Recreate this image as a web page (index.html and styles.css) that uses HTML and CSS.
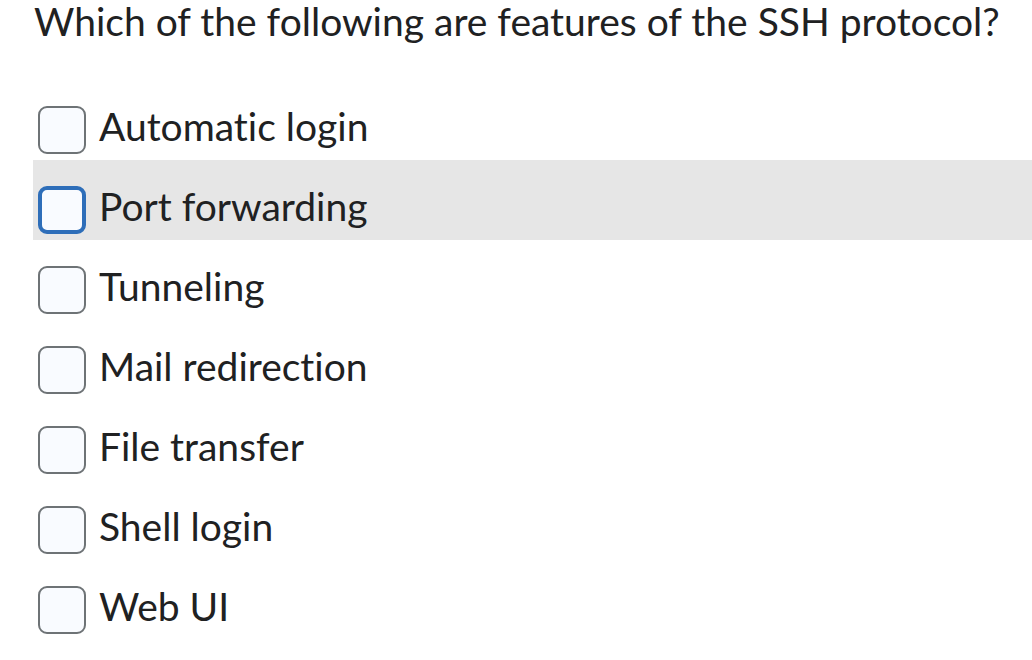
FILE: index.html
```html
<!DOCTYPE html>
<html>
<head>
<meta charset="utf-8">
<link rel="stylesheet" href="styles.css">
</head>
<body>
<div class="quiz">
  <h1 class="question">Which of the following are features of the SSH protocol?</h1>
  <ul class="options">
    <li class="option"><span class="box"></span><span class="label">Automatic login</span></li>
    <li class="option hover"><span class="box focus"></span><span class="label">Port forwarding</span></li>
    <li class="option"><span class="box"></span><span class="label">Tunneling</span></li>
    <li class="option"><span class="box"></span><span class="label">Mail redirection</span></li>
    <li class="option"><span class="box"></span><span class="label">File transfer</span></li>
    <li class="option"><span class="box"></span><span class="label">Shell login</span></li>
    <li class="option"><span class="box"></span><span class="label">Web UI</span></li>
  </ul>
</div>
</body>
</html>
```
FILE: styles.css
```css
html, body {
  margin: 0;
  padding: 0;
  background: #ffffff;
}
body {
  font-family: Lato, "Open Sans", sans-serif;
  color: #202122;
  width: 1032px;
  height: 660px;
  overflow: hidden;
  font-variant-ligatures: no-common-ligatures;
}
.quiz {
  padding-left: 33px;
}
.question {
  margin: 0;
  padding-left: 1px;
  font-size: 39px;
  font-weight: 400;
  line-height: 42px;
  height: 80px;
  box-sizing: border-box;
}
.options {
  list-style: none;
  margin: 0;
  padding: 0;
}
.option {
  height: 80px;
  box-sizing: border-box;
  display: flex;
  align-items: center;
  padding-left: 5px;
  padding-top: 20px;
}
.option.hover {
  background: #e6e6e6;
}
.box {
  width: 48px;
  height: 48px;
  box-sizing: border-box;
  border: 2px solid #6e7376;
  border-radius: 9px;
  background: #f9fbff;
  flex: none;
}
.box.focus {
  border: 4px solid #2e6eb9;
}
.label {
  margin-left: 13px;
  font-size: 39px;
  line-height: 46px;
  padding-bottom: 9px;
}
```
